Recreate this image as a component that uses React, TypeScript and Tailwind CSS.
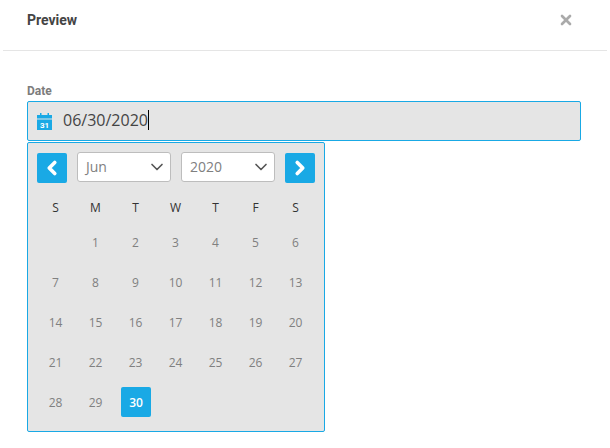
import { ChevronDown, ChevronLeft, ChevronRight, X } from 'lucide-react';

const dayNames = ['S', 'M', 'T', 'W', 'T', 'F', 'S'];
const days: (number | null)[] = [null, ...Array.from({ length: 30 }, (_, i) => i + 1)];

const CalendarIcon = () => (
  <svg width="15" height="17" viewBox="0 0 15 17" className="shrink-0">
    <path d="M0 2h3V0h1.500v2h6V0H12v2h3v3.500H0z" fill="#19a9e5" />
    <path d="M0 6.500h15V17H0z" fill="#19a9e5" />
    <text x="7.500" y="14.700" textAnchor="middle" fontSize="8" fontWeight="700" fill="#fff" fontFamily="Roboto, sans-serif">31</text>
  </svg>
);

const FakeSelect = ({ value, width }: { value: string; width: string }) => (
  <div className={`${width} h-[30px] mb-[2px] flex items-center justify-between bg-white border border-[#bdbdbd] rounded-[3px] pl-[8px] pr-[3px] text-sm text-[#808080]`}>
    <span>{value}</span>
    <ChevronDown className="w-5 h-5 text-[#555]" strokeWidth={2} />
  </div>
);

const App = () => {
  return (
    <div className="w-[610px] h-[448px] bg-white overflow-hidden font-['Open_Sans',sans-serif]">
      {/* Header */}
      <div className="mx-[3px] h-[51px] border-b border-[#e5e5e5] flex items-center justify-between pl-6 pr-[33px] pb-[11px]">
        <span className="font-['Roboto',sans-serif] font-bold text-sm text-[#444]">Preview</span>
        <X className="w-[16px] h-[16px] text-[#aaa]" strokeWidth={4} />
      </div>

      <div className="pl-[27px] pt-[33px]">
        <label className="block font-['Roboto',sans-serif] font-bold text-xs leading-[14px] text-[#7c7c7c] mb-[3px]">Date</label>
        <div className="w-[554px] h-10 bg-[#e5e5e5] border border-[#19a9e5] rounded-[2px] flex items-center pl-[9px] gap-[11px]">
          <CalendarIcon />
          <span className="text-base text-[#444] border-r border-black leading-[20px] mb-[2px]">06/30/2020</span>
        </div>

        {/* Calendar popover */}
        <div className="w-[298px] h-[290px] mt-px bg-[#e5e5e5] border border-[#19a9e5] rounded-[2px] pl-[8px] pt-[10px]">
          <div className="flex items-center gap-[10px] ml-px h-[30px]">
            <button className="w-[30px] h-[30px] bg-[#19a9e5] rounded-[2px] flex items-center justify-center">
              <ChevronLeft className="w-[22px] h-[22px] text-white" strokeWidth={4} />
            </button>
            <FakeSelect value="Jun" width="w-[94px]" />
            <FakeSelect value="2020" width="w-[94px]" />
            <button className="w-[30px] h-[30px] bg-[#19a9e5] rounded-[2px] flex items-center justify-center">
              <ChevronRight className="w-[22px] h-[22px] text-white" strokeWidth={4} />
            </button>
          </div>

          <div className="grid grid-cols-[repeat(7,40px)] grid-rows-[30px] auto-rows-[40px] mt-[9px] text-xs">
            {dayNames.map((name, i) => (
              <div key={i} className="flex items-center justify-center pr-px pt-[2px] text-[#333]">{name}</div>
            ))}
            {days.map((day, i) => (
              <div key={i} className="flex items-center justify-center">
                {day === 30 ? (
                  <span className="w-[30px] h-[30px] bg-[#19a9e5] rounded-[2px] text-white font-semibold pt-px flex items-center justify-center">{day}</span>
                ) : (
                  <span className="text-[#808080] pr-px pt-[2px]">{day}</span>
                )}
              </div>
            ))}
          </div>
        </div>
      </div>
    </div>
  );
};

export default App;
